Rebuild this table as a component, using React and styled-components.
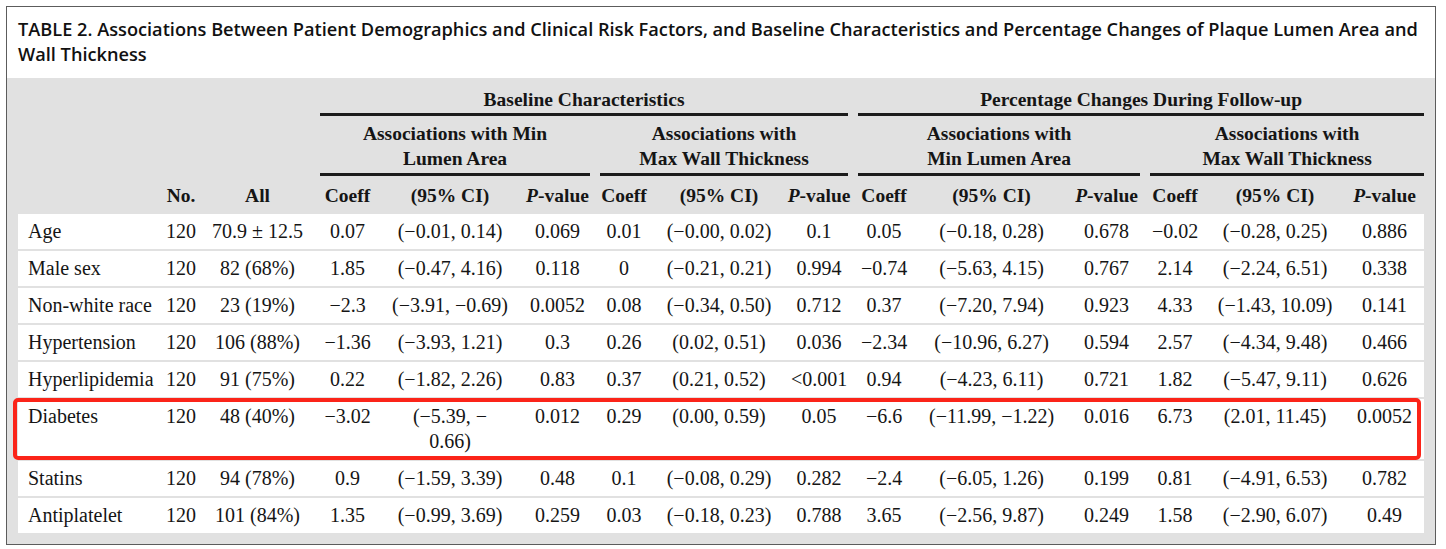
import styled, { createGlobalStyle } from "styled-components";

const GlobalStyle = createGlobalStyle`
  body {
    margin: 0;
    background: #ffffff;
  }
`;

const Frame = styled.div`
  box-sizing: border-box;
  width: 1430px;
  margin: 6px 0 0 6px;
  border: 1px solid #5c5c5c;
  background: #e1e1e1;
`;

const Caption = styled.div`
  background: #ffffff;
  padding: 10px 12px 11px 11px;
  font-family: "Open Sans", "Liberation Sans", sans-serif;
  font-weight: 600;
  font-size: 18.2px;
  line-height: 25px;
  color: #111111;
`;

const Body = styled.div`
  padding: 0 11px 9px;
`;

const Table = styled.table`
  width: 1406px;
  table-layout: fixed;
  border-collapse: separate;
  border-spacing: 0 2px;
  font-family: "Liberation Serif", "Times New Roman", serif;
  font-size: 20px;
  color: #151515;
`;

const HeadCell = styled.th`
  font-weight: 700;
  font-size: 19.5px;
  line-height: 24px;
  text-align: center;
  white-space: nowrap;
  padding: ${(p) => p.$pad || "6px 2px 4px"};
  vertical-align: bottom;
`;

const GroupLine = styled.div`
  margin: 0 ${(p) => (p.$last ? "0" : "5px")} 0 5px;
  padding-bottom: ${(p) => p.$pb || "1px"};
  border-bottom: 3px solid #1c1c1c;
  line-height: ${(p) => p.$lh || "24px"};
`;

const Row = styled.tr`
  position: relative;
`;

const Cell = styled.td`
  background: #ffffff;
  line-height: 25px;
  padding: 5px 2px;
  text-align: ${(p) => (p.$label ? "left" : "center")};
  padding-left: ${(p) => (p.$label ? "10px" : "2px")};
  vertical-align: ${(p) => (p.$top ? "top" : "middle")};
  white-space: nowrap;
`;

const Highlight = styled.div`
  position: absolute;
  left: -5px;
  right: 3px;
  top: -1px;
  bottom: -1px;
  border: 4px solid #fb2419;
  border-radius: 5px;
  pointer-events: none;
`;

const widths = [144, 38, 115, 65, 140, 75, 58, 132, 68, 62, 153, 77, 60, 140, 79];

const groups = [
  { top: "Associations with Min", bottom: "Lumen Area" },
  { top: "Associations with", bottom: "Max Wall Thickness" },
  { top: "Associations with", bottom: "Min Lumen Area" },
  { top: "Associations with", bottom: "Max Wall Thickness", last: true },
];

const M = "\u2212";

const rows = [
  ["Age", "120", "70.9 \u00b1 12.5", "0.07", `(${M}0.01, 0.14)`, "0.069", "0.01", `(${M}0.00, 0.02)`, "0.1", "0.05", `(${M}0.18, 0.28)`, "0.678", `${M}0.02`, `(${M}0.28, 0.25)`, "0.886"],
  ["Male sex", "120", "82 (68%)", "1.85", `(${M}0.47, 4.16)`, "0.118", "0", `(${M}0.21, 0.21)`, "0.994", `${M}0.74`, `(${M}5.63, 4.15)`, "0.767", "2.14", `(${M}2.24, 6.51)`, "0.338"],
  ["Non-white race", "120", "23 (19%)", `${M}2.3`, `(${M}3.91, ${M}0.69)`, "0.0052", "0.08", `(${M}0.34, 0.50)`, "0.712", "0.37", `(${M}7.20, 7.94)`, "0.923", "4.33", `(${M}1.43, 10.09)`, "0.141"],
  ["Hypertension", "120", "106 (88%)", `${M}1.36`, `(${M}3.93, 1.21)`, "0.3", "0.26", "(0.02, 0.51)", "0.036", `${M}2.34`, `(${M}10.96, 6.27)`, "0.594", "2.57", `(${M}4.34, 9.48)`, "0.466"],
  ["Hyperlipidemia", "120", "91 (75%)", "0.22", `(${M}1.82, 2.26)`, "0.83", "0.37", "(0.21, 0.52)", "<0.001", "0.94", `(${M}4.23, 6.11)`, "0.721", "1.82", `(${M}5.47, 9.11)`, "0.626"],
  ["Diabetes", "120", "48 (40%)", `${M}3.02`, [`(${M}5.39, ${M}`, "0.66)"], "0.012", "0.29", "(0.00, 0.59)", "0.05", `${M}6.6`, `(${M}11.99, ${M}1.22)`, "0.016", "6.73", "(2.01, 11.45)", "0.0052"],
  ["Statins", "120", "94 (78%)", "0.9", `(${M}1.59, 3.39)`, "0.48", "0.1", `(${M}0.08, 0.29)`, "0.282", `${M}2.4`, `(${M}6.05, 1.26)`, "0.199", "0.81", `(${M}4.91, 6.53)`, "0.782"],
  ["Antiplatelet", "120", "101 (84%)", "1.35", `(${M}0.99, 3.69)`, "0.259", "0.03", `(${M}0.18, 0.23)`, "0.788", "3.65", `(${M}2.56, 9.87)`, "0.249", "1.58", `(${M}2.90, 6.07)`, "0.49"],
];

const PValue = () => (
  <>
    <i>P</i>-value
  </>
);

const CellText = ({ value }) =>
  Array.isArray(value) ? (
    <>
      {value[0]}
      <br />
      {value[1]}
    </>
  ) : (
    value
  );

export default function App() {
  return (
    <>
      <GlobalStyle />
      <Frame>
        <Caption>
          TABLE 2. Associations Between Patient Demographics and Clinical Risk Factors, and Baseline
          Characteristics and Percentage Changes of Plaque Lumen Area and Wall Thickness
        </Caption>
        <Body>
          <Table>
            <colgroup>
              {widths.map((w, i) => (
                <col key={i} style={{ width: w }} />
              ))}
            </colgroup>
            <thead>
              <tr>
                <HeadCell colSpan={3} />
                <HeadCell colSpan={6} $pad="8px 0 0">
                  <GroupLine>Baseline Characteristics</GroupLine>
                </HeadCell>
                <HeadCell colSpan={6} $pad="8px 0 0">
                  <GroupLine $last>Percentage Changes During Follow-up</GroupLine>
                </HeadCell>
              </tr>
              <tr>
                <HeadCell colSpan={3} />
                {groups.map((g, i) => (
                  <HeadCell key={i} colSpan={3} $pad="3px 0 0">
                    <GroupLine $last={g.last} $lh="25px" $pb="2px">
                      {g.top}
                      <br />
                      {g.bottom}
                    </GroupLine>
                  </HeadCell>
                ))}
              </tr>
              <tr>
                <HeadCell />
                <HeadCell>No.</HeadCell>
                <HeadCell>All</HeadCell>
                {groups.map((g, i) => [
                  <HeadCell key={`c${i}`}>Coeff</HeadCell>,
                  <HeadCell key={`ci${i}`}>(95% CI)</HeadCell>,
                  <HeadCell key={`p${i}`}>
                    <PValue />
                  </HeadCell>,
                ])}
              </tr>
            </thead>
            <tbody>
              {rows.map((r) => {
                const tall = r[0] === "Diabetes";
                return (
                  <Row key={r[0]}>
                    {r.map((v, i) => (
                      <Cell key={i} $label={i === 0} $top={tall}>
                        {i === 0 && tall && <Highlight />}
                        <CellText value={v} />
                      </Cell>
                    ))}
                  </Row>
                );
              })}
            </tbody>
          </Table>
        </Body>
      </Frame>
    </>
  );
}
